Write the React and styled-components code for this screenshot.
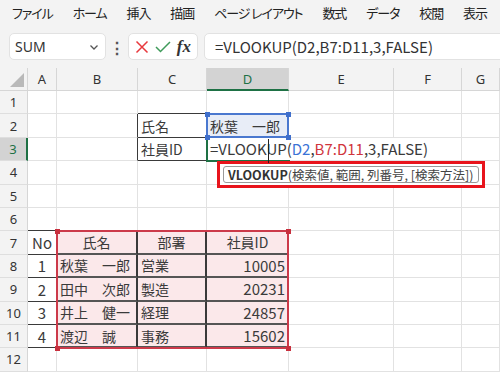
import styled, { createGlobalStyle } from 'styled-components';

// Page-wide reset and base font.
const GlobalStyle = createGlobalStyle`
  html, body { margin: 0; padding: 0; }
  body {
    width: 500px;
    height: 375px;
    overflow: hidden;
    background: #ffffff;
    font-family: "Noto Sans CJK JP", "Noto Sans", sans-serif;
    color: #333;
  }
`;

const COLS = [28, 29, 81, 69, 82, 105, 68];
const ROW_H = 23.4;
const HEAD_H = 23;
const rowTop = (n) => HEAD_H + (n - 1) * ROW_H;

const Window = styled.div`
  display: flex;
  flex-direction: column;
  width: 500px;
  height: 375px;
  overflow: hidden;
`;

const Ribbon = styled.div`
  background: #f3f3f3;
  display: flex;
  flex-direction: column;
`;

const MenuBar = styled.div`
  display: flex;
  align-items: center;
  gap: 20px;
  height: 25px;
  padding-left: 12px;
  font-size: 13px;
  letter-spacing: -1.1px;
  font-feature-settings: "palt" 1;
  color: #222;
  white-space: nowrap;
`;

const FormulaRow = styled.div`
  display: flex;
  align-items: center;
  height: 43px;
  padding-left: 9px;
`;

const Box = styled.div`
  display: flex;
  align-items: center;
  height: 27px;
  background: #fff;
  border: 1px solid #e2e2e2;
  border-radius: 5px;
  box-sizing: border-box;
`;

const NameBox = styled(Box)`
  width: 97px;
  padding: 0 6px 0 5px;
  justify-content: space-between;
  font-family: "Noto Sans", sans-serif;
  font-size: 14px;
  color: #333;
`;

const Kebab = styled.div`
  width: 22px;
  text-align: center;
  font-size: 16px;
  font-weight: bold;
  color: #555;
`;

const ButtonBox = styled(Box)`
  width: 70px;
  justify-content: space-around;
  padding: 0 3px;
`;

const Fx = styled.span`
  font-family: "Liberation Serif", serif;
  font-style: italic;
  font-weight: bold;
  font-size: 17px;
  color: #333;
`;

const FormulaInput = styled(Box)`
  flex: 1;
  margin-left: 6px;
  margin-right: -10px;
  padding-left: 10px;
  font-size: 15px;
  color: #333;
`;

const Sheet = styled.div`
  position: relative;
  flex: 1;
  display: grid;
  grid-template-columns: ${COLS.map((c) => c + 'px').join(' ')} 1fr;
  grid-template-rows: ${HEAD_H}px;
  grid-auto-rows: ${ROW_H}px;
  align-content: start;
  overflow: hidden;
`;

const Corner = styled.div`
  background: #f3f3f3;
  border-right: 1px solid #d6d6d6;
  border-bottom: 1px solid #d6d6d6;
  box-sizing: border-box;
  position: relative;
  &::after {
    content: "";
    position: absolute;
    right: 3px;
    bottom: 3px;
    border-style: solid;
    border-width: 0 0 14px 14px;
    border-color: transparent transparent #b9b9b9 transparent;
  }
`;

const ColHead = styled.div`
  display: flex;
  align-items: center;
  justify-content: center;
  background: ${(p) => (p.$active ? '#d3d3d3' : '#f3f3f3')};
  border-right: 1px solid #d6d6d6;
  border-bottom: ${(p) => (p.$active ? '2px solid #1e7145' : '1px solid #d6d6d6')};
  box-sizing: border-box;
  font-family: "Noto Sans", sans-serif;
  font-size: 13px;
  color: ${(p) => (p.$active ? '#1e7145' : '#333')};
`;

const RowHead = styled.div`
  display: flex;
  align-items: center;
  justify-content: center;
  background: ${(p) => (p.$active ? '#d3d3d3' : '#f3f3f3')};
  border-right: ${(p) => (p.$active ? '2px solid #1e7145' : '1px solid #d6d6d6')};
  border-bottom: 1px solid #dedede;
  box-sizing: border-box;
  font-family: "Noto Sans", sans-serif;
  font-size: 13px;
  color: ${(p) => (p.$active ? '#1e7145' : '#333')};
`;

const Cell = styled.div`
  display: flex;
  align-items: center;
  justify-content: ${(p) => p.$align || 'flex-start'};
  padding: 0 3px;
  background: ${(p) => p.$bg || '#fff'};
  border-right: ${(p) => p.$rw || 1}px solid ${(p) => p.$r || '#e2e2e2'};
  border-bottom: ${(p) => p.$bw || 1}px solid ${(p) => p.$b || '#e2e2e2'};
  box-sizing: border-box;
  font-size: ${(p) => (p.$latin ? 15 : 14)}px;
  color: #3a3a3a;
  white-space: nowrap;
  overflow: visible;
  grid-column: ${(p) => (p.$span ? `span ${p.$span}` : 'auto')};
  position: relative;
  z-index: ${(p) => (p.$span ? 1 : 0)};
`;

const Ref = styled.span`
  color: ${(p) => p.$c};
`;

const Frame = styled.div`
  position: absolute;
  box-sizing: border-box;
  border: 2px solid ${(p) => p.$c};
  pointer-events: none;
  z-index: 3;
`;

const Handle = styled.div`
  position: absolute;
  width: 5px;
  height: 5px;
  background: ${(p) => p.$c};
  z-index: 4;
`;

const ActiveEdge = styled.div`
  position: absolute;
  background: #1e7145;
  z-index: 3;
`;

const IBeam = styled.div`
  position: absolute;
  width: 1px;
  background: #222;
  z-index: 6;
`;

const TipOutline = styled.div`
  position: absolute;
  box-sizing: border-box;
  border: 3px solid #e8141c;
  padding: 2px 3px;
  background: #fff;
  z-index: 5;
  display: flex;
`;

const Tip = styled.div`
  flex: 1;
  display: flex;
  align-items: center;
  padding: 0 4px;
  border: 1px solid #9a9a9a;
  border-radius: 3px;
  font-size: 12.5px;
  color: #444;
  white-space: nowrap;
  overflow: hidden;
  b { color: #333; }
`;

const menu = ['ファイル', 'ホーム', '挿入', '描画', 'ページ レイアウト', '数式', 'データ', '校閲', '表示'];
const letters = ['A', 'B', 'C', 'D', 'E', 'F', 'G'];

const DARK = '#3a3a3a';
const PINK = '#fbe8ea';

const staff = [
  ['1', '秋葉　一郎', '営業', '10005'],
  ['2', '田中　次郎', '製造', '20231'],
  ['3', '井上　健一', '経理', '24857'],
  ['4', '渡辺　誠', '事務', '15602'],
];

function Chevron() {
  return (
    <svg width="10" height="10" viewBox="0 0 10 10">
      <path d="M1.5 3.5 L5 7 L8.5 3.5" fill="none" stroke="#555" strokeWidth="1.3" />
    </svg>
  );
}

function Cross() {
  return (
    <svg width="14" height="14" viewBox="0 0 14 14">
      <path d="M1.5 1.5 L12.5 12.5 M12.5 1.5 L1.5 12.5" stroke="#e8383d" strokeWidth="1.5" />
    </svg>
  );
}

function Check() {
  return (
    <svg width="16" height="14" viewBox="0 0 16 14">
      <path d="M1 7 L5.5 11.5 L15 2" fill="none" stroke="#3f9b5a" strokeWidth="1.5" />
    </svg>
  );
}

function corners(x, y, w, h) {
  return [
    [x - 2, y - 2],
    [x + w - 3, y - 2],
    [x - 2, y + h - 3],
    [x + w - 3, y + h - 3],
  ];
}

function renderRow(n) {
  const cells = [];
  // Seven grid cells A..G per row; row 3 has the editor spread over D..F.
  if (n === 1) {
    letters.forEach((l, i) => cells.push(<Cell key={l} $b={i === 2 ? DARK : undefined} />));
  } else if (n === 2 || n === 3) {
    cells.push(<Cell key="A" />);
    cells.push(<Cell key="B" $r={DARK} />);
    cells.push(
      <Cell key="C" $r={DARK} $b={DARK}>
        {n === 2 ? '氏名' : '社員ID'}
      </Cell>
    );
    if (n === 2) {
      cells.push(<Cell key="D" $bg="#e8edf7">秋葉　一郎</Cell>);
      cells.push(<Cell key="E" />, <Cell key="F" />, <Cell key="G" />);
    } else {
      cells.push(
        <Cell key="D" $span={3} $latin>
          =VLOOKUP(<Ref $c="#3b73d6">D2</Ref>,<Ref $c="#d0343c">B7:D11</Ref>,3,FALSE)
        </Cell>
      );
      cells.push(<Cell key="G" />);
    }
  } else if (n === 6) {
    letters.forEach((l, i) => cells.push(<Cell key={l} $b={i < 4 ? DARK : undefined} />));
  } else if (n >= 7 && n <= 11) {
    const row = n === 7 ? ['No', '氏名', '部署', '社員ID'] : staff[n - 8];
    const head = n === 7;
    cells.push(
      <Cell key="A" $align="center" $r={DARK} $b={DARK} $latin>
        {row[0]}
      </Cell>
    );
    cells.push(
      <Cell key="B" $align={head ? 'center' : 'flex-start'} $bg={PINK} $r={DARK} $rw={2} $b="#555" $bw={2}>
        {row[1]}
      </Cell>
    );
    cells.push(
      <Cell key="C" $align={head ? 'center' : 'flex-start'} $bg={PINK} $r={DARK} $rw={2} $b="#555" $bw={2}>
        {row[2]}
      </Cell>
    );
    cells.push(
      <Cell key="D" $align={head ? 'center' : 'flex-end'} $bg={PINK} $r={DARK} $b="#555" $bw={2} $latin={!head}>
        {row[3]}
      </Cell>
    );
    cells.push(<Cell key="E" />, <Cell key="F" />, <Cell key="G" />);
  } else {
    letters.forEach((l) => cells.push(<Cell key={l} />));
  }
  return [
    <RowHead key={'h' + n} $active={n === 3}>
      {n}
    </RowHead>,
    ...cells,
  ];
}

export default function App() {
  const blue = { x: 207, y: rowTop(2), w: 82, h: ROW_H + 0.6 };
  const red = { x: 57, y: rowTop(7), w: 232, h: ROW_H * 5 + 0.6 };
  const rows = Array.from({ length: 12 }, (_, i) => i + 1);

  return (
    <Window>
      <GlobalStyle />
      <Ribbon>
        <MenuBar>
          {menu.map((m) => (
            <span key={m}>{m}</span>
          ))}
        </MenuBar>
        <FormulaRow>
          <NameBox>
            <span>SUM</span>
            <Chevron />
          </NameBox>
          <Kebab>⋮</Kebab>
          <ButtonBox>
            <Cross />
            <Check />
            <Fx>fx</Fx>
          </ButtonBox>
          <FormulaInput>=VLOOKUP(D2,B7:D11,3,FALSE)</FormulaInput>
        </FormulaRow>
      </Ribbon>

      <Sheet>
        <Corner />
        {letters.map((l) => (
          <ColHead key={l} $active={l === 'D'}>
            {l}
          </ColHead>
        ))}
        {rows.map((n) => renderRow(n))}

        <Frame $c="#4a78cf" style={{ left: blue.x - 1, top: blue.y - 1, width: blue.w + 1, height: blue.h + 1 }} />
        {corners(blue.x, blue.y, blue.w, blue.h).map(([x, y], i) => (
          <Handle key={'b' + i} $c="#3f6fcc" style={{ left: x, top: y }} />
        ))}

        <ActiveEdge style={{ left: 206, top: rowTop(3), width: 2, height: ROW_H }} />
        <ActiveEdge style={{ left: 206, top: rowTop(4) - 1.5, width: 84, height: 2 }} />

        <Frame $c="#cc3a4a" style={{ left: red.x - 1, top: red.y - 1, width: red.w + 1, height: red.h + 1 }} />
        {corners(red.x, red.y, red.w, red.h).map(([x, y], i) => (
          <Handle key={'r' + i} $c="#c8303e" style={{ left: x, top: y }} />
        ))}

        <TipOutline style={{ left: 217, top: rowTop(4) - 0.5, width: 268, height: 27 }}>
          <Tip>
            <b>VLOOKUP</b>(検索値, 範囲, 列番号, [検索方法])
          </Tip>
        </TipOutline>
        <IBeam style={{ left: 268, top: rowTop(3) + 1, height: 24 }} />
      </Sheet>
    </Window>
  );
}
